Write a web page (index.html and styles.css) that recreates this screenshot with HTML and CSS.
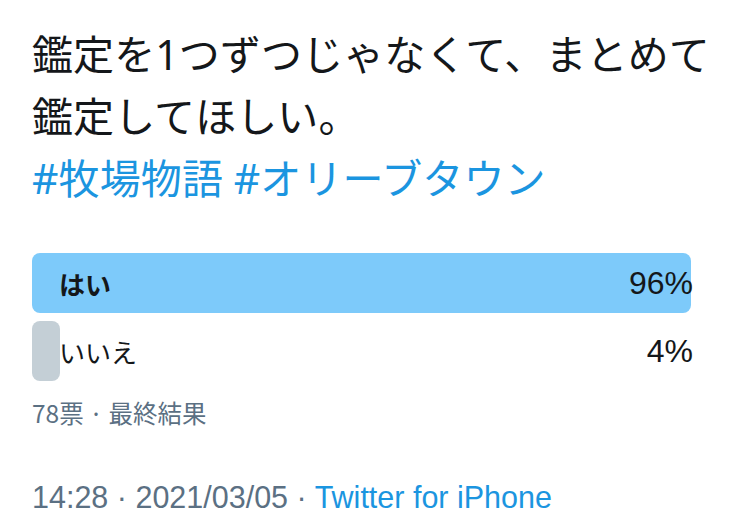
FILE: index.html
```html
<!DOCTYPE html>
<html lang="ja">
<head>
    <meta charset="UTF-8">
    <title>Tweet poll</title>
    <link rel="stylesheet" href="styles.css">
</head>
<body>
    <div class="tweet">
        <p class="text">鑑定を1つずつじゃなくて、まとめて<br>鑑定してほしい。<br><a class="tag">#牧場物語</a> <a class="tag">#オリーブタウン</a></p>

        <div class="poll">
            <div class="choice winner">
                <div class="bar" style="width: 100%"></div>
                <span class="label">はい</span>
                <span class="pct">96%</span>
            </div>
            <div class="choice">
                <div class="bar" style="width: 28px"></div>
                <span class="label">いいえ</span>
                <span class="pct">4%</span>
            </div>
        </div>
        <div class="votes">78票 · 最終結果</div>

        <div class="meta">14:28 · 2021/03/05 · <a class="source">Twitter for iPhone</a></div>
    </div>
</body>
</html>
```
FILE: styles.css
```css
body {margin: 0; background: #ffffff; font-family: "Noto Sans CJK JP", "Noto Sans", sans-serif; color: #14171a;}
.tweet {padding: 23px 20px 0 32px;}
.text {font-family: "Noto Sans", "Noto Sans CJK JP", sans-serif; font-size: 41px; line-height: 62px; margin: 0; letter-spacing: 0.1px;}
.tag, .source {color: #1b95e0; text-decoration: none;}
.poll {width: 659px; margin-top: 44px; display: flex; flex-direction: column; gap: 8px;}
.choice {position: relative; height: 60px; display: flex; align-items: center; justify-content: space-between; padding-left: 27px; font-size: 26px;}
.choice .bar {position: absolute; left: 0; top: 0; bottom: 0; background: #c4cfd6; border-radius: 8px;}
.winner .bar {background: #7dcafa;}
.winner {font-weight: bold;}
.label, .pct {position: relative;}
.pct {font-family: "Liberation Sans", sans-serif; font-weight: normal; font-size: 32px; margin-right: -2px;}
.votes {margin-top: 14px; font-size: 24.5px; color: #5b7083;}
.meta {margin-top: 50px; font-size: 30.5px; color: #5b7083; font-family: "Liberation Sans", "Noto Sans CJK JP", sans-serif;}
```
